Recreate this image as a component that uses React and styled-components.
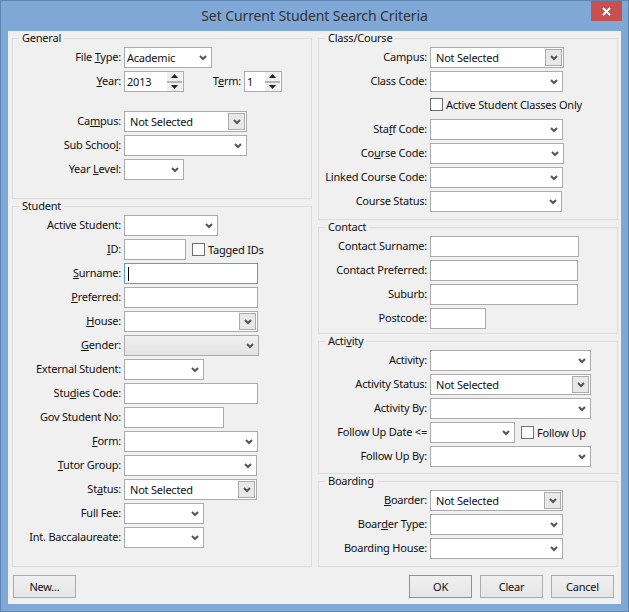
import styled, { createGlobalStyle } from 'styled-components';

const GlobalStyle = createGlobalStyle`
    html, body {
        margin: 0;
        padding: 0;
        background: #7fa8d6;
    }
    * {
        box-sizing: border-box;
    }
`

const Chevron = () => (
    <svg width="8" height="6" viewBox="0 0 8 6">
        <path d="M1 1 L4 4 L7 1" fill="none" stroke="#555" strokeWidth="2" />
    </svg>
)

const UpArrow = () => (
    <svg width="7" height="4" viewBox="0 0 7 4"><path d="M3.5 0 L7 4 H0 Z" fill="#222" /></svg>
)

const DownArrow = () => (
    <svg width="7" height="4" viewBox="0 0 7 4"><path d="M0 0 H7 L3.5 4 Z" fill="#222" /></svg>
)

const CloseIcon = () => (
    <svg width="9" height="9" viewBox="0 0 9 9">
        <path d="M1 1 L8 8 M8 1 L1 8" stroke="#fff" strokeWidth="2" fill="none" />
    </svg>
)

// label wraps the text with the mnemonic letter at index u
function Mnemonic({ text, u }) {
    if (u === undefined) return text
    return <>{text.slice(0, u)}<u>{text[u]}</u>{text.slice(u + 1)}</>
}

function Combo({ w, value, disabled, boxed }) {
    const hasButton = boxed || !!value
    return <Field $w={w} $disabled={disabled}>
        <Value $boxed={hasButton}>{value}</Value>
        {hasButton
            ? <ComboButton><Chevron /></ComboButton>
            : <PlainArrow><Chevron /></PlainArrow>}
    </Field>
}

function PlainCombo({ w, value }) {
    return <Field $w={w}>
        <Value>{value}</Value>
        <PlainArrow><Chevron /></PlainArrow>
    </Field>
}

function Spinner({ w, value }) {
    return <Field $w={w}>
        <Value>{value}</Value>
        <SpinButtons>
            <SpinPart><UpArrow /></SpinPart>
            <SpinPart $down><DownArrow /></SpinPart>
        </SpinButtons>
    </Field>
}

function FormRow({ label, u, top, children }) {
    return <Row $top={top}>
        <Label><Mnemonic text={label} u={u} />:</Label>
        {children}
    </Row>
}

function Check({ label, gap }) {
    return <CheckWrap $gap={gap}>
        <CheckBox />
        <span>{label}</span>
    </CheckWrap>
}

function App() {
    return <Window>
        <GlobalStyle />
        <TitleBar>
            Set Current Student Search Criteria
            <CloseButton><CloseIcon /></CloseButton>
        </TitleBar>
        <Client>
            <Columns>
                <Column>
                    <Group $bottom={18}>
                        <Legend>General</Legend>
                        <FormRow label="File Type" u={5}><PlainCombo w={88} value="Academic" /></FormRow>
                        <FormRow label="Year" u={0}>
                            <Spinner w={60} value="2013" />
                            <SideLabel>T<u>e</u>rm:</SideLabel>
                            <Spinner w={38} value="1" />
                        </FormRow>
                        <FormRow label="Campus" u={2} top={16}><Combo w={123} value="Not Selected" /></FormRow>
                        <FormRow label="Sub School" u={9}><Combo w={123} /></FormRow>
                        <FormRow label="Year Level" u={5}><Combo w={60} /></FormRow>
                    </Group>
                    <Group $bottom={18}>
                        <Legend>Student</Legend>
                        <FormRow label="Active Student"><Combo w={94} /></FormRow>
                        <FormRow label="ID" u={0}>
                            <TextBox $w={62} />
                            <Check label="Tagged IDs" gap={3} />
                        </FormRow>
                        <FormRow label="Surname" u={0}><TextBox $w={134} $focused><Caret /></TextBox></FormRow>
                        <FormRow label="Preferred" u={0}><TextBox $w={134} /></FormRow>
                        <FormRow label="House" u={0}><Combo w={134} boxed /></FormRow>
                        <FormRow label="Gender" u={0}><Combo w={135} disabled /></FormRow>
                        <FormRow label="External Student"><Combo w={80} /></FormRow>
                        <FormRow label="Studies Code" u={3}><TextBox $w={134} /></FormRow>
                        <FormRow label="Gov Student No"><TextBox $w={100} /></FormRow>
                        <FormRow label="Form" u={0}><Combo w={134} /></FormRow>
                        <FormRow label="Tutor Group" u={0}><Combo w={133} /></FormRow>
                        <FormRow label="Status" u={2}><Combo w={133} value="Not Selected" /></FormRow>
                        <FormRow label="Full Fee"><Combo w={80} /></FormRow>
                        <FormRow label="Int. Baccalaureate"><Combo w={80} /></FormRow>
                    </Group>
                </Column>
                <Column>
                    <Group $bottom={7}>
                        <Legend>Class/Course</Legend>
                        <FormRow label="Campus"><Combo w={134} value="Not Selected" /></FormRow>
                        <FormRow label="Class Code"><Combo w={133} /></FormRow>
                        <CheckRow><Check label="Active Student Classes Only" /></CheckRow>
                        <FormRow label="Staff Code" u={3}><Combo w={133} /></FormRow>
                        <FormRow label="Course Code" u={2}><Combo w={134} /></FormRow>
                        <FormRow label="Linked Course Code"><Combo w={133} /></FormRow>
                        <FormRow label="Course Status"><Combo w={132} /></FormRow>
                    </Group>
                    <Group $bottom={4}>
                        <Legend>Contact</Legend>
                        <FormRow label="Contact Surname"><TextBox $w={149} /></FormRow>
                        <FormRow label="Contact Preferred"><TextBox $w={148} /></FormRow>
                        <FormRow label="Suburb"><TextBox $w={148} /></FormRow>
                        <FormRow label="Postcode"><TextBox $w={56} /></FormRow>
                    </Group>
                    <Group $bottom={6}>
                        <Legend>Acti<u>v</u>ity</Legend>
                        <FormRow label="Activity"><Combo w={161} /></FormRow>
                        <FormRow label="Activity Status"><Combo w={161} value="Not Selected" /></FormRow>
                        <FormRow label="Activity By"><Combo w={161} /></FormRow>
                        <Row>
                            <Label>Follow Up Date &lt;=</Label>
                            <Combo w={85} />
                            <Check label="Follow Up" gap={3} />
                        </Row>
                        <FormRow label="Follow Up By"><Combo w={161} /></FormRow>
                    </Group>
                    <Group $bottom={7}>
                        <Legend>Boarding</Legend>
                        <FormRow label="Boarder" u={0}><Combo w={133} value="Not Selected" /></FormRow>
                        <FormRow label="Boarder Type" u={4}><Combo w={133} /></FormRow>
                        <FormRow label="Boarding House"><Combo w={133} /></FormRow>
                    </Group>
                </Column>
            </Columns>
            <Footer>
                <Button>New...</Button>
                <FooterRight>
                    <Button $default>OK</Button>
                    <Button>Clear</Button>
                    <Button>Cancel</Button>
                </FooterRight>
            </Footer>
        </Client>
    </Window>
}
export default App

const Window = styled.div`
    width: 629px;
    height: 612px;
    padding: 0 7px 7px 7px;
    border: 1px solid #5f86b3;
    background: #7fa8d6;
    display: flex;
    flex-direction: column;
    font-family: "Noto Sans", sans-serif;
    font-size: 11px;
    letter-spacing: -0.22px;
    color: #111;
    overflow: hidden;
`

const TitleBar = styled.div`
    height: 30px;
    flex: none;
    display: flex;
    align-items: center;
    justify-content: center;
    padding-bottom: 2px;
    font-size: 14px;
    letter-spacing: -0.1px;
    color: #333;
    position: relative;
`

const CloseButton = styled.div`
    position: absolute;
    top: 0;
    right: -1px;
    width: 31px;
    height: 20px;
    background: #c75050;
    display: flex;
    align-items: center;
    justify-content: center;
`

const Client = styled.div`
    flex: 1;
    background: #f0f0f0;
    padding: 0 4px;
    display: flex;
    flex-direction: column;
`

const Columns = styled.div`
    display: grid;
    grid-template-columns: 300px 300px;
    gap: 6px;
`

const Column = styled.div`
    display: flex;
    flex-direction: column;
`

const Group = styled.fieldset`
    margin: 0;
    padding: 2px 0 ${(props) => props.$bottom}px 0;
    border: 1px solid #dcdcdc;
    display: flex;
    flex-direction: column;
    gap: 3px;
    min-width: 0;
`

const Legend = styled.legend`
    margin-left: 6px;
    padding: 0 3px;
    height: 14px;
    line-height: 14px;
`

const Row = styled.div`
    display: flex;
    align-items: center;
    height: 21px;
    gap: 3px;
    margin-top: ${(props) => props.$top || 0}px;
`

const Label = styled.div`
    width: 108px;
    flex: none;
    text-align: right;
    white-space: nowrap;
    margin-top: -3px;
`

const SideLabel = styled.div`
    width: 57px;
    flex: none;
    text-align: right;
    margin-left: -3px;
    margin-top: -3px;
`

const Field = styled.div`
    width: ${(props) => props.$w}px;
    height: 21px;
    flex: none;
    border: 1px solid #ababab;
    background: ${(props) => props.$disabled ? 'linear-gradient(#f0f0f0, #e3e3e3)' : '#fff'};
    display: flex;
    align-items: center;
    padding: 0 1px;
`

const Value = styled.div`
    flex: 1;
    padding-left: ${(props) => props.$boxed ? 4 : 1}px;
    white-space: pre;
`

const ComboButton = styled.div`
    width: 17px;
    height: 17px;
    flex: none;
    border: 1px solid #ababab;
    background: #e8e8e8;
    display: flex;
    align-items: center;
    justify-content: center;
`

const PlainArrow = styled.div`
    width: 14px;
    height: 17px;
    flex: none;
    margin-left: auto;
    display: flex;
    align-items: center;
    justify-content: center;
`

const SpinButtons = styled.div`
    width: 15px;
    height: 19px;
    flex: none;
    display: flex;
    flex-direction: column;
`

const SpinPart = styled.div`
    flex: 1;
    background: #f0f0f0;
    display: flex;
    align-items: center;
    justify-content: center;
    border-top: ${(props) => props.$down ? '2px solid #b5b5b5' : 'none'};
`

const TextBox = styled.div`
    width: ${(props) => props.$w}px;
    height: 21px;
    flex: none;
    border: 1px solid ${(props) => props.$focused ? '#569de5' : '#ababab'};
    background: #fff;
    display: flex;
    align-items: center;
    padding-left: 3px;
`

const Caret = styled.div`
    width: 1px;
    height: 14px;
    background: #000;
`

const CheckWrap = styled.div`
    display: flex;
    align-items: center;
    gap: 3px;
    margin-left: ${(props) => props.$gap || 0}px;
    white-space: nowrap;
`

const CheckBox = styled.div`
    width: 13px;
    height: 13px;
    flex: none;
    border: 1px solid #707070;
    background: #fff;
`

const CheckRow = styled.div`
    display: flex;
    align-items: flex-start;
    height: 21px;
    padding: 2px 0 0 111px;
`

const Footer = styled.div`
    display: flex;
    justify-content: space-between;
    padding: 8px 3px 0 1px;
`

const FooterRight = styled.div`
    display: flex;
    gap: 8px;
`

const Button = styled.div`
    width: 63px;
    height: 23px;
    border: 1px solid ${(props) => props.$default ? '#569de5' : '#acacac'};
    background: linear-gradient(#f0f0f0, #e5e5e5);
    display: flex;
    align-items: center;
    justify-content: center;
`
